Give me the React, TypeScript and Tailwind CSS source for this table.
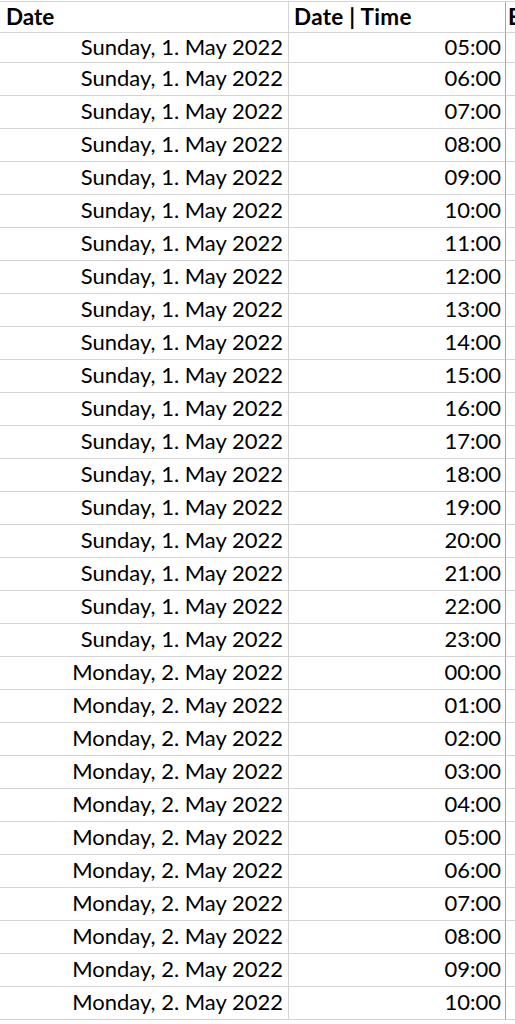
import React from "react";

const sunday = [5, 6, 7, 8, 9, 10, 11, 12, 13, 14, 15, 16, 17, 18, 19, 20, 21, 22, 23];
const monday = [0, 1, 2, 3, 4, 5, 6, 7, 8, 9, 10];

const rows: { date: string; time: string }[] = [
  ...sunday.map((h) => ({ date: "Sunday, 1. May 2022", time: `${String(h).padStart(2, "0")}:00` })),
  ...monday.map((h) => ({ date: "Monday, 2. May 2022", time: `${String(h).padStart(2, "0")}:00` })),
];

export default function App() {
  return (
    <div
      className="w-[515px] h-[1024px] overflow-hidden bg-white text-black pt-px"
      style={{ fontFamily: "Lato, 'Open Sans', sans-serif" }}
    >
      <div className="grid grid-cols-[289px_217px_1fr] border-t border-[#d4d4d4] h-[32px] text-[22.5px] font-bold leading-none">
        <div className="border-r border-b border-[#d4d4d4] flex items-center pl-[6px]">Date</div>
        <div className="border-r border-b border-r-[#a6a6a6] border-b-[#d4d4d4] flex items-center pl-[5px] tracking-[0.3px]">
          Date | Time
        </div>
        <div className="border-b border-[#d4d4d4] flex items-center pl-[2px] overflow-hidden whitespace-nowrap">E</div>
      </div>
      {rows.map((r, i) => (
        <div
          key={i}
          className={`grid grid-cols-[289px_217px_1fr] text-[22px] leading-none ${i === 0 ? "h-[30px]" : "h-[33px]"}`}
        >
          <div className="border-r border-b border-[#d4d4d4] flex items-center justify-end pr-[5px] pb-[2px]">{r.date}</div>
          <div className="border-r border-b border-r-[#a6a6a6] border-b-[#d4d4d4] flex items-center justify-end pr-[4px] pb-[2px]">
            {r.time}
          </div>
          <div className="border-b border-[#d4d4d4]"></div>
        </div>
      ))}
    </div>
  );
}
